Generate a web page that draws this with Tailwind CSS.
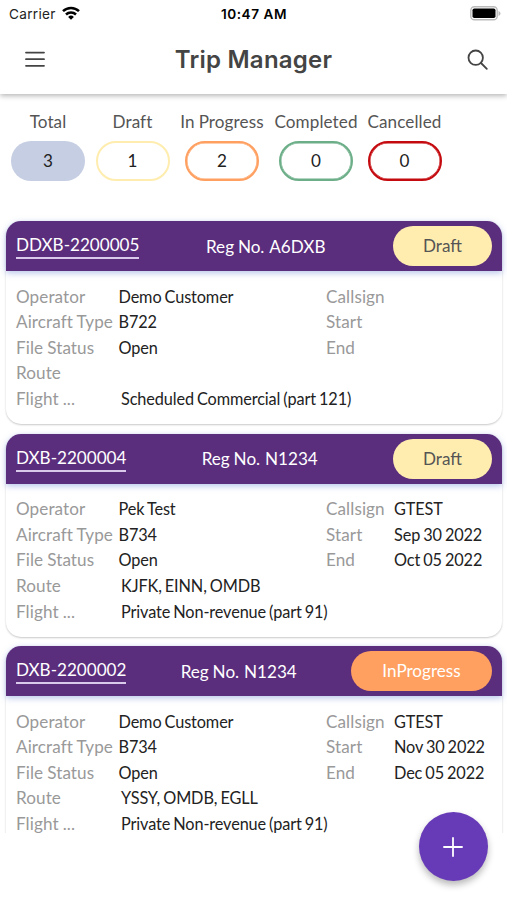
<!DOCTYPE html>
<html lang="en">
<head>
<meta charset="utf-8">
<title>Trip Manager</title>
<script src="https://cdn.jsdelivr.net/npm/@tailwindcss/browser@4"></script>
</head>
<body class="relative flex h-[900px] w-[507px] flex-col overflow-hidden bg-white font-['Lato',sans-serif] text-[17.1px] text-[#222]">

<div class="relative z-10 grid h-[30px] shrink-0 grid-cols-3 items-center bg-white pr-[6px] pb-[2px] pl-[9px] font-['Inter',sans-serif] text-[13.6px] text-black">
  <div class="flex items-center gap-[6px] text-[#222]"><span class="tracking-[0.3px]">Carrier</span>
    <svg class="-mt-[2px] h-[14px] w-[18px]" viewBox="0 0 18 14" fill="none" stroke="#000" stroke-width="2.5"><path d="M1 5.2a11.6 11.6 0 0 1 16 0M4 8.500a7.200 7.200 0 0 1 10 0"/><path d="M9 13.800 6.100 11a4.200 4.200 0 0 1 5.800 0Z" fill="#000" stroke="none"/></svg>
  </div>
  <div class="-ml-[2px] text-center font-semibold tracking-[0.55px] whitespace-nowrap">10:47 AM</div>
  <svg class="-mt-px ml-auto h-[15px] w-[31px]" viewBox="0 0 31 15"><rect x=".8" y=".8" width="26.4" height="13" rx="3.6" fill="#fff" stroke="#bbb" stroke-width="1.4"/><rect x="2.500" y="2.500" width="23" height="9.600" rx="1.800"/><path d="M28.500 5v5q2-.8 2-2.500t-2-2.500" fill="#bbb"/></svg>
</div>

<header class="flex h-[64px] shrink-0 items-center justify-between bg-white pr-[19px] pb-[5px] pl-[25px] shadow-[0_2px_5px_rgba(0,0,0,0.28)]">
  <svg class="-mt-px h-[16px] w-[20px]" viewBox="0 0 20 16" stroke="#444" stroke-width="1.8" stroke-linecap="round"><path d="M1 1.600h18M1 8.200h18M1 14.800h18"/></svg>
  <h1 class="-ml-[5px] font-['Inter',sans-serif] text-[24px] font-semibold tracking-[0.25px] text-[#444]">Trip Manager</h1>
  <svg class="h-[21px] w-[21px]" viewBox="0 0 21 21" fill="none" stroke="#444" stroke-width="1.8" stroke-linecap="round"><circle cx="8.700" cy="8.700" r="7.200"/><path d="m14 14 5.800 5.800"/></svg>
</header>

<section class="flex h-[127px] shrink-0 pt-[15px] pl-[6px] text-center text-[#555]">
  <div class="flex w-[84px] flex-col items-center gap-[7px]"><span class="leading-[25px] tracking-[0.1px]">Total</span><span class="flex h-[40px] w-[74px] items-center justify-center rounded-full bg-[#c6cee3] text-[#222]">3</span></div>
  <div class="flex w-[85px] flex-col items-center gap-[7px]"><span class="leading-[25px] tracking-[0.1px]">Draft</span><span class="flex h-[40px] w-[74px] items-center justify-center rounded-full border-[2.500px] border-[#ffedaf] text-[#222]">1</span></div>
  <div class="flex w-[94px] flex-col items-center gap-[7px]"><span class="leading-[25px] tracking-[0.1px] [word-spacing:-0.5px] whitespace-nowrap">In Progress</span><span class="flex h-[40px] w-[74px] items-center justify-center rounded-full border-[2.500px] border-[#ff9f60] text-[#222] shadow-[inset_0_0_0_0.5px_#ff9f60]">2</span></div>
  <div class="flex w-[94px] flex-col items-center gap-[7px]"><span class="leading-[25px] tracking-[0.1px] whitespace-nowrap">Completed</span><span class="flex h-[40px] w-[74px] items-center justify-center rounded-full border-[2.500px] border-[#6cae88] text-[#222] shadow-[inset_0_0_0_0.5px_#6cae88]">0</span></div>
  <div class="flex w-[83px] flex-col items-center gap-[7px]"><span class="leading-[25px] tracking-[0.1px] whitespace-nowrap">Cancelled</span><span class="flex h-[40px] w-[74px] items-center justify-center rounded-full border-[2.500px] border-[#c40a0e] text-[#222] shadow-[inset_0_0_0_0.5px_#c40a0e]">0</span></div>
</section>

<main class="-mt-[10px] flex h-[622px] shrink-0 flex-col gap-[9.500px] overflow-hidden pt-[10px] pr-[5px] pl-[6px]">
  <article class="h-[203px] shrink-0 rounded-[15px] bg-white shadow-[0_1px_2px_rgba(0,0,0,0.22)]">
    <div class="flex h-[50px] items-center justify-between rounded-t-[15px] bg-[#5a2d7d] pr-[10px] pl-[10px] text-white shadow-[0_2px_6px_rgba(110,140,215,0.5)]">
      <a class="border-b-2 border-[#d9c9ea] leading-[24px]">DDXB-2200005</a>
      <span class="pt-px pr-px [word-spacing:-0.5px]">Reg No. <span class="ml-px">A6DXB</span></span>
      <span class="flex h-[40px] w-[99px] items-center justify-center rounded-full bg-[#ffedaf] text-[#555]">Draft</span>
    </div>
    <div class="grid grid-cols-[102.500px_207.500px_68px_1fr] pt-[12.700px] pl-[10px] text-[16.300px] leading-[25.600px] tracking-[-0.12px] text-[#222] [word-spacing:-1px] whitespace-nowrap">
      <span class="text-[17.100px] tracking-[0.1px] text-[#999] [word-spacing:-0.5px]">Operator</span><span>Demo Customer</span><span class="text-[17.100px] tracking-[0.1px] text-[#999]">Callsign</span><span></span>
      <span class="text-[17.100px] tracking-[0.1px] text-[#999] [word-spacing:-0.5px]">Aircraft Type</span><span>B722</span><span class="text-[17.100px] tracking-[0.1px] text-[#999]">Start</span><span></span>
      <span class="text-[17.100px] tracking-[0.1px] text-[#999] [word-spacing:-0.5px]">File Status</span><span>Open</span><span class="text-[17.100px] tracking-[0.1px] text-[#999]">End</span><span></span>
      <span class="text-[17.100px] tracking-[0.1px] text-[#999] [word-spacing:-0.5px]">Route</span><span class="col-span-3 pl-[2.500px]"></span>
      <span class="text-[17.100px] tracking-[0.1px] text-[#999] [word-spacing:-0.5px]">Flight ...</span><span class="col-span-3 pl-[2.500px]">Scheduled Commercial (part 121)</span>
    </div>
  </article>

  <article class="h-[203px] shrink-0 rounded-[15px] bg-white shadow-[0_1px_2px_rgba(0,0,0,0.22)]">
    <div class="flex h-[50px] items-center justify-between rounded-t-[15px] bg-[#5a2d7d] pr-[10px] pl-[10px] text-white shadow-[0_2px_6px_rgba(110,140,215,0.5)]">
      <a class="border-b-2 border-[#d9c9ea] leading-[24px]">DXB-2200004</a>
      <span class="pt-px [word-spacing:-0.5px]">Reg No. <span class="ml-px">N1234</span></span>
      <span class="flex h-[40px] w-[99px] items-center justify-center rounded-full bg-[#ffedaf] text-[#555]">Draft</span>
    </div>
    <div class="grid grid-cols-[102.500px_207.500px_68px_1fr] pt-[12.700px] pl-[10px] text-[16.300px] leading-[25.600px] tracking-[-0.12px] text-[#222] [word-spacing:-1px] whitespace-nowrap">
      <span class="text-[17.100px] tracking-[0.1px] text-[#999] [word-spacing:-0.5px]">Operator</span><span>Pek Test</span><span class="text-[17.100px] tracking-[0.1px] text-[#999]">Callsign</span><span>GTEST</span>
      <span class="text-[17.100px] tracking-[0.1px] text-[#999] [word-spacing:-0.5px]">Aircraft Type</span><span>B734</span><span class="text-[17.100px] tracking-[0.1px] text-[#999]">Start</span><span>Sep 30 2022</span>
      <span class="text-[17.100px] tracking-[0.1px] text-[#999] [word-spacing:-0.5px]">File Status</span><span>Open</span><span class="text-[17.100px] tracking-[0.1px] text-[#999]">End</span><span>Oct 05 2022</span>
      <span class="text-[17.100px] tracking-[0.1px] text-[#999] [word-spacing:-0.5px]">Route</span><span class="col-span-3 pl-[2.500px]">KJFK, EINN, OMDB</span>
      <span class="text-[17.100px] tracking-[0.1px] text-[#999] [word-spacing:-0.5px]">Flight ...</span><span class="col-span-3 pl-[2.500px]">Private Non-revenue (part 91)</span>
    </div>
  </article>

  <article class="h-[203px] shrink-0 rounded-[15px] bg-white shadow-[0_1px_2px_rgba(0,0,0,0.22)]">
    <div class="flex h-[50px] items-center justify-between rounded-t-[15px] bg-[#5a2d7d] pr-[10px] pl-[10px] text-white shadow-[0_2px_6px_rgba(110,140,215,0.5)]">
      <a class="border-b-2 border-[#d9c9ea] leading-[24px]">DXB-2200002</a>
      <span class="pt-px [word-spacing:-0.5px]">Reg No. <span class="ml-px">N1234</span></span>
      <span class="flex h-[40px] w-[141px] items-center justify-center rounded-full bg-[#ff9f60] text-white">InProgress</span>
    </div>
    <div class="grid grid-cols-[102.500px_207.500px_68px_1fr] pt-[12.700px] pl-[10px] text-[16.300px] leading-[25.600px] tracking-[-0.12px] text-[#222] [word-spacing:-1px] whitespace-nowrap">
      <span class="text-[17.100px] tracking-[0.1px] text-[#999] [word-spacing:-0.5px]">Operator</span><span>Demo Customer</span><span class="text-[17.100px] tracking-[0.1px] text-[#999]">Callsign</span><span>GTEST</span>
      <span class="text-[17.100px] tracking-[0.1px] text-[#999] [word-spacing:-0.5px]">Aircraft Type</span><span>B734</span><span class="text-[17.100px] tracking-[0.1px] text-[#999]">Start</span><span>Nov 30 2022</span>
      <span class="text-[17.100px] tracking-[0.1px] text-[#999] [word-spacing:-0.5px]">File Status</span><span>Open</span><span class="text-[17.100px] tracking-[0.1px] text-[#999]">End</span><span>Dec 05 2022</span>
      <span class="text-[17.100px] tracking-[0.1px] text-[#999] [word-spacing:-0.5px]">Route</span><span class="col-span-3 pl-[2.500px]">YSSY, OMDB, EGLL</span>
      <span class="text-[17.100px] tracking-[0.1px] text-[#999] [word-spacing:-0.5px]">Flight ...</span><span class="col-span-3 pl-[2.500px]">Private Non-revenue (part 91)</span>
    </div>
  </article>
</main>

<button class="absolute top-[812px] left-[418.500px] flex h-[69px] w-[69px] items-center justify-center rounded-full bg-[#673ab7] shadow-[0_4px_7px_rgba(0,0,0,0.28)]" aria-label="Add trip">
  <svg class="h-[20px] w-[20px]" viewBox="0 0 20 20" stroke="#fff" stroke-width="1.800"><path d="M10 .3v19.400M.3 10h19.400"/></svg>
</button>
</body>
</html>
